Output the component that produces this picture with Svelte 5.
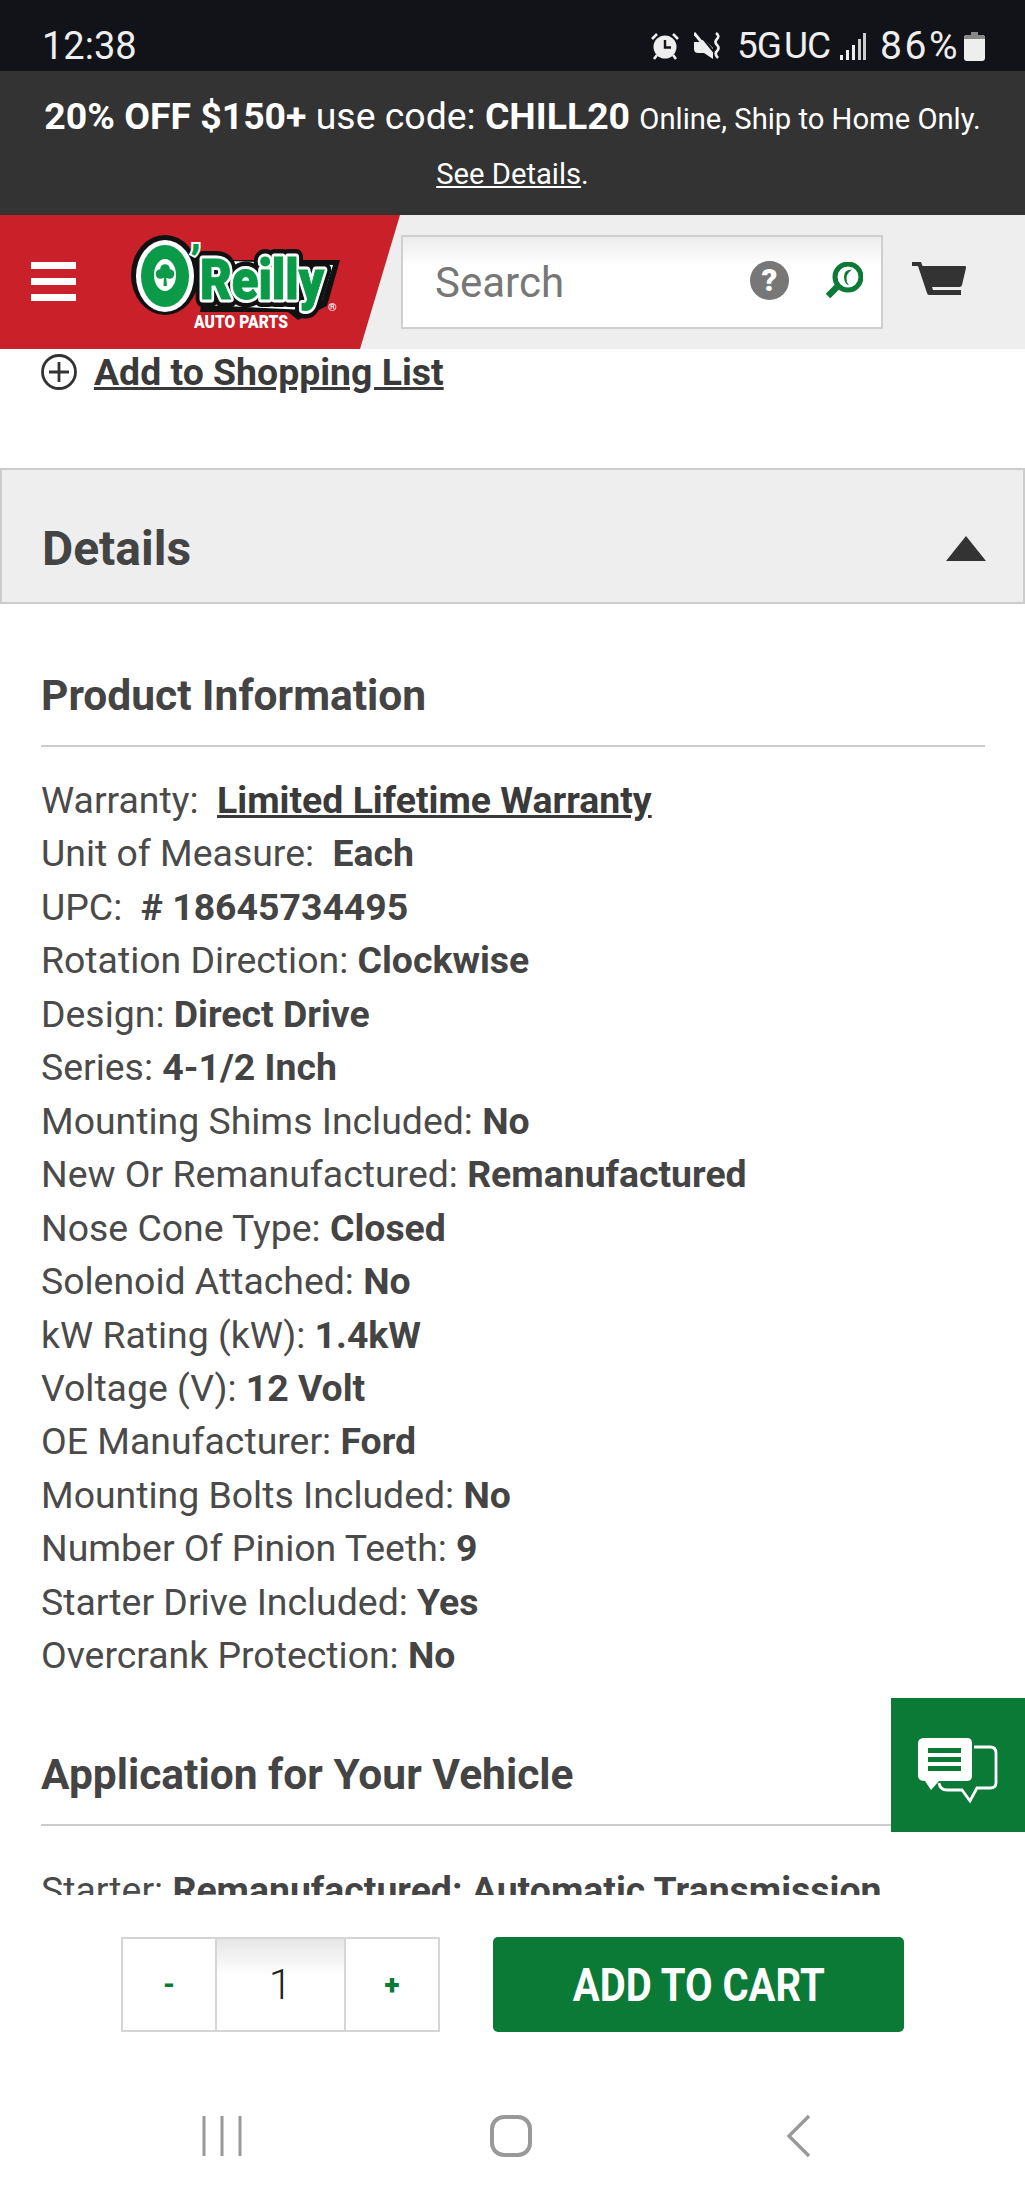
<script>
  const specs = [
    { label: 'Warranty:  ', value: 'Limited Lifetime Warranty', link: true },
    { label: 'Unit of Measure:  ', value: 'Each' },
    { label: 'UPC:  ', value: '# 18645734495' },
    { label: 'Rotation Direction: ', value: 'Clockwise' },
    { label: 'Design: ', value: 'Direct Drive' },
    { label: 'Series: ', value: '4-1/2 Inch' },
    { label: 'Mounting Shims Included: ', value: 'No' },
    { label: 'New Or Remanufactured: ', value: 'Remanufactured' },
    { label: 'Nose Cone Type: ', value: 'Closed' },
    { label: 'Solenoid Attached: ', value: 'No' },
    { label: 'kW Rating (kW): ', value: '1.4kW' },
    { label: 'Voltage (V): ', value: '12 Volt' },
    { label: 'OE Manufacturer: ', value: 'Ford' },
    { label: 'Mounting Bolts Included: ', value: 'No' },
    { label: 'Number Of Pinion Teeth: ', value: '9' },
    { label: 'Starter Drive Included: ', value: 'Yes' },
    { label: 'Overcrank Protection: ', value: 'No' }
  ];
</script>

<div class="phone">
  <div class="status">
    <span class="time">12:38</span>
    <div class="status-right">
      <svg class="s-alarm" width="28" height="28" viewBox="0 0 28 28">
        <circle cx="14" cy="15" r="11.5" fill="#eee" />
        <path d="M14 8v7.5h6" fill="none" stroke="#111318" stroke-width="2.4" />
        <path d="M1 7l5-5M27 7l-5-5" stroke="#eee" stroke-width="2.6" />
        <path d="M6 23l-3 4M22 23l3 4" stroke="#eee" stroke-width="2.6" />
      </svg>
      <svg class="s-mute" width="28" height="28" viewBox="0 0 28 28">
        <path d="M0 10h6l4-3 9 9v11l-9-6H4q-4 0-4-4z" fill="#eee" />
        <path d="M7 4l13 16" stroke="#111318" stroke-width="2" />
        <path d="M1 0l18 22" stroke="#eee" stroke-width="3" transform="translate(-1 1)" />
        <path d="M22 1q4 3 1 6t0 6q3 3 0 6t1 7" fill="none" stroke="#eee" stroke-width="2.6" />
      </svg>
      <span class="net">5G</span>
      <span class="net uc">UC</span>
      <svg class="s-signal" width="26" height="27" viewBox="0 0 26 27">
        <rect x="0" y="22" width="3" height="5" fill="#eee" />
        <rect x="6" y="17" width="3" height="10" fill="#eee" />
        <rect x="12" y="12" width="3" height="15" fill="#eee" />
        <rect x="18" y="6" width="3" height="21" fill="#ccc" />
        <rect x="23" y="0" width="3" height="27" fill="#ccc" />
      </svg>
      <span class="pct">86%</span>
      <svg class="s-batt" width="21" height="29" viewBox="0 0 21 29">
        <path d="M7 0h7v3h4q3 0 3 3v20q0 3-3 3H3q-3 0-3-3V6q0-3 3-3h4z" fill="#eee" />
        <path d="M7 0h7v3h4q3 0 3 3v1H0V6q0-3 3-3h4z" fill="#888" />
      </svg>
    </div>
  </div>

  <div class="promo">
    <div class="promo-line"><b>20% OFF $150+</b> use code: <b>CHILL20</b> <small>Online, Ship to Home Only.</small></div>
    <div class="promo-line second"><u>See Details</u>.</div>
  </div>

  <header class="header">
    <div class="brand">
      <div class="burger"><i></i><i></i><i></i></div>
      <svg class="logo" width="220" height="105" viewBox="125 230 220 105">
        <ellipse cx="165" cy="277" rx="34" ry="40" fill="#111" />
        <path d="M208 262 L340 262 L327 308 L298 322 L288 314 L200 314 Z" fill="#111" />
        <path d="M205 262 L333 267 L322 302 L306 312 L205 307 Z" fill="#fff" />
        <text x="200" y="301" class="reilly outer" textLength="124" lengthAdjust="spacingAndGlyphs">Reilly</text>
        <text x="200" y="301" class="reilly white" textLength="124" lengthAdjust="spacingAndGlyphs">Reilly</text>
        <ellipse cx="165" cy="278" rx="29" ry="36" fill="#fff" />
        <ellipse cx="165" cy="278" rx="24" ry="31" fill="#0a9a48" />
        <ellipse cx="165" cy="277" rx="11" ry="16" fill="#fff" />
        <g fill="#0a9a48">
          <circle cx="165" cy="271" r="4.8" />
          <circle cx="160.500" cy="276" r="4.800" />
          <circle cx="169.500" cy="276" r="4.800" />
          <path d="M164 276h2l1 12h-3.500z" />
        </g>
        <text x="190" y="279" class="apos">’</text>
        <text x="200" y="301" class="reilly" textLength="124" lengthAdjust="spacingAndGlyphs">Reilly</text>
        <text x="328" y="313" class="reg">®</text>
        <text x="194" y="330" class="auto" textLength="94" lengthAdjust="spacingAndGlyphs">AUTO PARTS</text>
      </svg>
    </div>
    <div class="search">
      <span class="placeholder">Search</span>
      <span class="help">?</span>
      <svg class="glass" width="38" height="38" viewBox="0 0 38 38">
        <circle cx="23" cy="15" r="13" fill="none" stroke="#0a7a36" stroke-width="5" />
        <path d="M12 25L3 34" stroke="#0a7a36" stroke-width="6.500" />
        <path d="M27 7.5q-8 0-8 7t5 9q-3-4-2.500-8t5.500-8z" fill="#0a7a36" />
      </svg>
    </div>
    <svg class="cart" width="54" height="38" viewBox="0 0 54 38">
      <path d="M0 1h9l1.500 4H53q1.500 0 1 2l-4 17q-.5 2-2.500 2H20l1 3h28v5H17q-1.500 0-2-2L6 5H0z" fill="#333" />
    </svg>
  </header>

  <main class="content">
    <div class="list-link">
      <svg width="36" height="36" viewBox="0 0 36 36">
        <circle cx="18" cy="18" r="16.500" fill="none" stroke="#333" stroke-width="2.800" />
        <path d="M18 8v20M8 18h20" stroke="#333" stroke-width="2.800" />
      </svg>
      <a href="#list">Add to Shopping List</a>
    </div>

    <div class="panel">
      <h2>Details</h2>
      <span class="tri"></span>
    </div>

    <section class="info">
      <h3>Product Information</h3>
      <ul>
        {#each specs as s}
          <li>{s.label}{#if s.link}<a href="#w">{s.value}</a>{:else}<b>{s.value}</b>{/if}</li>
        {/each}
      </ul>
      <h3 class="app">Application for Your Vehicle</h3>
      <ul>
        <li>Starter: <b>Remanufactured: Automatic Transmission</b></li>
      </ul>
    </section>
  </main>

  <div class="chat">
    <svg width="80" height="66" viewBox="0 0 80 66">
      <path d="M56 9h16q6 0 6 6v30q0 5-6 5H59L52 63 44 52H29q-7 0-8-7" fill="none" stroke="#fff" stroke-width="2.800" />
      <path d="M7 0h42q5 0 5 5v33q0 5-5 5H21l-8 9-6-9q-7 0-7-5V5q0-5 7-5z" fill="#fff" />
      <path d="M10 10h33v5H10zM10 19h33v5H10zM10 28h33v5H10z" fill="#0a7a36" />
    </svg>
  </div>

  <div class="bottom">
    <div class="buy">
      <div class="qty">
        <span class="step">-</span>
        <span class="num">1</span>
        <span class="step">+</span>
      </div>
      <button class="add"><span>ADD TO CART</span></button>
    </div>
    <nav class="softkeys">
      <svg width="42" height="42" viewBox="0 0 42 42"><path d="M3 1v40M21 1v40M39 1v40" stroke="#999" stroke-width="3" /></svg>
      <svg class="home" width="44" height="44" viewBox="0 0 44 44"><rect x="3" y="3" width="38" height="38" rx="12" fill="none" stroke="#999" stroke-width="4" /></svg>
      <svg width="26" height="44" viewBox="0 0 26 44"><path d="M23 2L3 22l20 20" fill="none" stroke="#999" stroke-width="3.400" /></svg>
    </nav>
  </div>
</div>

<style>
  :global(body) { margin: 0; background: #fff; }
  .phone {
    position: relative;
    width: 1025px;
    height: 2200px;
    display: flex;
    flex-direction: column;
    overflow: hidden;
    font-family: Roboto, "Liberation Sans", sans-serif;
    color: #444;
    background: #fff;
  }
  .status {
    height: 71px;
    flex: none;
    background: #111318;
    color: #eee;
    display: flex;
    align-items: center;
    justify-content: space-between;
    padding: 21px 40px 0 42px;
    box-sizing: border-box;
    font-size: 38px;
  }
  .time { line-height: 50px; }
  .status-right { display: flex; align-items: center; line-height: 50px; }
  .s-mute { margin-left: 15px; }
  .net { margin-left: 15px; font-size: 37px; letter-spacing: -1px; }
  .net.uc { margin-left: 3px; }
  .s-signal { margin-left: 10px; }
  .pct { margin-left: 14px; font-size: 39px; letter-spacing: 2.500px; }
  .s-batt { margin-left: 4px; }

  .promo {
    height: 144px;
    flex: none;
    box-sizing: border-box;
    background: #333;
    color: #fff;
    text-align: center;
    padding-top: 18px;
    font-size: 37.400px;
  }
  .promo-line { line-height: 55px; white-space: nowrap; }
  .promo-line small { font-size: 29.200px; }
  .promo-line.second { font-size: 29.200px; }

  .header {
    height: 134px;
    flex: none;
    background: #eee;
    display: flex;
    align-items: flex-start;
  }
  .brand {
    width: 400px;
    height: 134px;
    flex: none;
    position: relative;
    background: #c9202a;
    clip-path: polygon(0 0, 100% 0, 360px 100%, 0 100%);
    display: flex;
    align-items: center;
    padding-left: 31px;
    box-sizing: border-box;
  }
  .burger { display: flex; flex-direction: column; gap: 9px; width: 45px; flex: none; margin-top: -1px; }
  .burger i { display: block; height: 7px; background: #fff; }
  .logo { margin-left: 49px; margin-top: -3px; flex: none; }
  .logo text { font-family: Roboto, "Liberation Sans", sans-serif; font-weight: 900; }
  .reilly { font-size: 56px; fill: #0a9a48; stroke: #0a9a48; stroke-width: 1px; }
  .reilly.outer { fill: #111; stroke: #111; stroke-width: 16px; stroke-linejoin: round; }
  .reilly.white { fill: #fff; stroke: #fff; stroke-width: 7px; stroke-linejoin: round; }
  .apos { font-size: 44px; fill: #0a9a48; stroke: #fff; stroke-width: 4px; paint-order: stroke; }
  .reg { font-size: 11px; fill: #fff; font-weight: 400; }
  .auto { font-size: 19px; fill: #fff; }

  .search {
    margin: 20px 0 0 1px;
    width: 482px;
    height: 94px;
    box-sizing: border-box;
    border: 2px solid #cfcfcf;
    background: linear-gradient(#ececec, #fff 32%);
    display: flex;
    align-items: center;
    padding-left: 32px;
    flex: none;
  }
  .placeholder { font-size: 42px; color: #777; flex: 1; }
  .help {
    width: 39px;
    height: 39px;
    border-radius: 50%;
    background: #777;
    color: #fff;
    font-weight: 900;
    font-size: 31px;
    line-height: 39px;
    text-align: center;
    margin: -3px 36px 0 0;
  }
  .glass { margin: -3px 18px 0 0; }
  .cart { margin: 46px 0 0 29px; flex: none; }

  .content { flex: 1; min-height: 0; overflow: hidden; }
  .list-link {
    display: flex;
    align-items: center;
    height: 46px;
    padding-left: 41px;
    gap: 17px;
    font-size: 37.400px;
    font-weight: 700;
  }
  .list-link a, li a { color: #3a3a3a; text-decoration: underline; font-weight: 700; }

  .panel {
    margin-top: 73px;
    height: 136px;
    box-sizing: border-box;
    border: 2px solid #ccc;
    background: #eee;
    display: flex;
    align-items: center;
    justify-content: space-between;
    padding: 25px 37px 0 40px;
  }
  .panel h2 { margin: 0; font-size: 48px; font-weight: 700; color: #444; }
  .tri {
    width: 0;
    height: 0;
    border-left: 20px solid transparent;
    border-right: 20px solid transparent;
    border-bottom: 25px solid #333;
  }

  .info { padding: 64px 40px 0 41px; }
  h3 {
    margin: 0;
    font-size: 42.500px;
    line-height: 56px;
    font-weight: 700;
    padding-bottom: 21px;
    border-bottom: 2px solid #ccc;
    color: #444;
  }
  h3.app { margin-top: 64px; }
  ul { list-style: none; margin: 27px 0 0; padding: 0; }
  h3.app + ul { margin-top: 38px; }
  li { font-size: 37.400px; line-height: 53.450px; white-space: pre; color: #4a4a4a; }
  li b { font-weight: 700; color: #444; }

  .chat {
    position: absolute;
    left: 891px;
    top: 1698px;
    width: 134px;
    height: 134px;
    background: #0a7a36;
    display: flex;
    align-items: flex-start;
    padding: 40px 0 0 27px;
    box-sizing: border-box;
  }

  .bottom { height: 305px; flex: none; background: #fff; }
  .buy { display: flex; padding: 42px 0 0 121px; }
  .qty {
    width: 319px;
    height: 95px;
    box-sizing: border-box;
    border: 2px solid #d5d5d5;
    display: flex;
    flex: none;
  }
  .step {
    width: 92px;
    flex: none;
    display: flex;
    align-items: center;
    justify-content: center;
    color: #0a7a36;
    font-size: 28px;
    font-weight: 900;
  }
  .num {
    flex: 1;
    border-left: 2px solid #d5d5d5;
    border-right: 2px solid #d5d5d5;
    background: linear-gradient(#e6e6e6, #fff 40%);
    display: flex;
    align-items: center;
    justify-content: center;
    font-size: 42px;
    font-weight: 300;
    color: #222;
  }
  .add {
    margin-left: 53px;
    width: 411px;
    height: 95px;
    border: 0;
    border-radius: 5px;
    background: #0a7a36;
    color: #fff;
    font-family: inherit;
    font-size: 46px;
    font-weight: 700;
  }
  .add span { display: inline-block; transform: scaleX(0.87); white-space: nowrap; }
  .softkeys {
    display: flex;
    justify-content: space-between;
    align-items: center;
    padding: 0 213px 0 201px;
    margin-top: 82px;
  }
  .home { margin-right: 8px; }
</style>
